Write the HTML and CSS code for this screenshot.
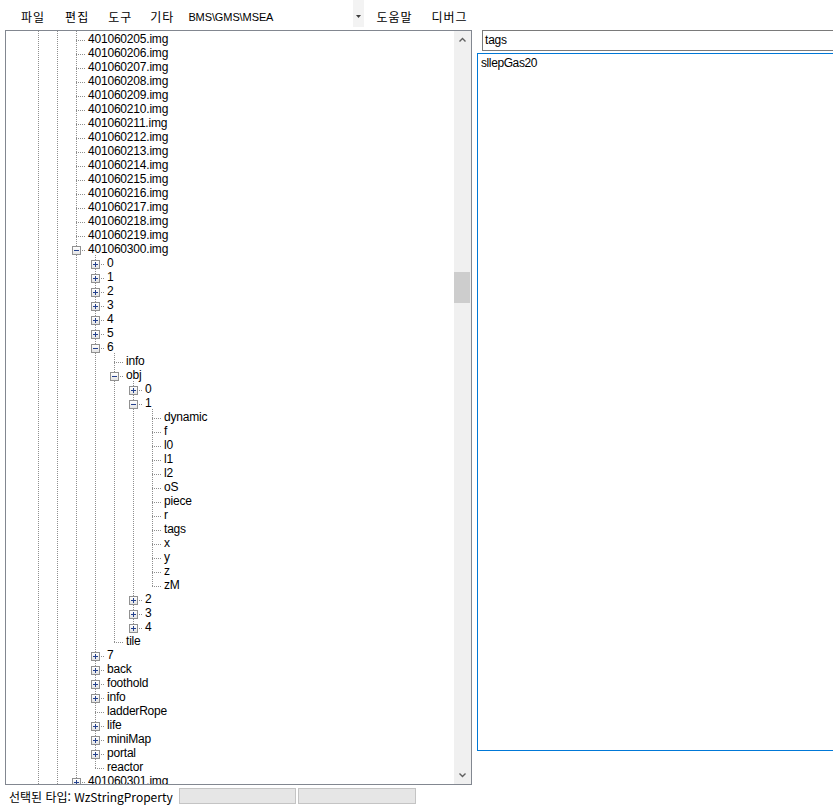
FILE: index.html
```html
<!DOCTYPE html>
<html lang="ko">
<head>
<meta charset="utf-8">
<title>HaRepacker</title>
<link rel="stylesheet" href="styles.css">
</head>
<body>
<div class="app">
  <div class="menubar">
    <span class="mi mi-file">파일</span>
    <span class="mi mi-edit">편집</span>
    <span class="mi mi-tools">도구</span>
    <span class="mi mi-etc">기타</span>
    <div class="combo">
      <span class="combo-text">BMS\GMS\MSEA</span>
      <span class="combo-btn"><svg width="5" height="3" viewBox="0 0 5 3"><path d="M0 0h5L2.5 3z" fill="#3c3c3c"/></svg></span>
    </div>
    <span class="mi mi-help">도움말</span>
    <span class="mi mi-debug">디버그</span>
  </div>

  <div class="main">
    <div class="tree">
      <div class="tree-body">
        <div class="r"><span class="c p"></span><span class="c p"></span><span class="c t"></span><span class="tx">401060205.img</span></div>
        <div class="r"><span class="c p"></span><span class="c p"></span><span class="c t"></span><span class="tx">401060206.img</span></div>
        <div class="r"><span class="c p"></span><span class="c p"></span><span class="c t"></span><span class="tx">401060207.img</span></div>
        <div class="r"><span class="c p"></span><span class="c p"></span><span class="c t"></span><span class="tx">401060208.img</span></div>
        <div class="r"><span class="c p"></span><span class="c p"></span><span class="c t"></span><span class="tx">401060209.img</span></div>
        <div class="r"><span class="c p"></span><span class="c p"></span><span class="c t"></span><span class="tx">401060210.img</span></div>
        <div class="r"><span class="c p"></span><span class="c p"></span><span class="c t"></span><span class="tx">401060211.img</span></div>
        <div class="r"><span class="c p"></span><span class="c p"></span><span class="c t"></span><span class="tx">401060212.img</span></div>
        <div class="r"><span class="c p"></span><span class="c p"></span><span class="c t"></span><span class="tx">401060213.img</span></div>
        <div class="r"><span class="c p"></span><span class="c p"></span><span class="c t"></span><span class="tx">401060214.img</span></div>
        <div class="r"><span class="c p"></span><span class="c p"></span><span class="c t"></span><span class="tx">401060215.img</span></div>
        <div class="r"><span class="c p"></span><span class="c p"></span><span class="c t"></span><span class="tx">401060216.img</span></div>
        <div class="r"><span class="c p"></span><span class="c p"></span><span class="c t"></span><span class="tx">401060217.img</span></div>
        <div class="r"><span class="c p"></span><span class="c p"></span><span class="c t"></span><span class="tx">401060218.img</span></div>
        <div class="r"><span class="c p"></span><span class="c p"></span><span class="c t"></span><span class="tx">401060219.img</span></div>
        <div class="r"><span class="c p"></span><span class="c p"></span><span class="c t"><b class="bx"></b></span><span class="tx">401060300.img</span></div>
        <div class="r"><span class="c p"></span><span class="c p"></span><span class="c p"></span><span class="c t"><b class="bx pl"></b></span><span class="tx">0</span></div>
        <div class="r"><span class="c p"></span><span class="c p"></span><span class="c p"></span><span class="c t"><b class="bx pl"></b></span><span class="tx">1</span></div>
        <div class="r"><span class="c p"></span><span class="c p"></span><span class="c p"></span><span class="c t"><b class="bx pl"></b></span><span class="tx">2</span></div>
        <div class="r"><span class="c p"></span><span class="c p"></span><span class="c p"></span><span class="c t"><b class="bx pl"></b></span><span class="tx">3</span></div>
        <div class="r"><span class="c p"></span><span class="c p"></span><span class="c p"></span><span class="c t"><b class="bx pl"></b></span><span class="tx">4</span></div>
        <div class="r"><span class="c p"></span><span class="c p"></span><span class="c p"></span><span class="c t"><b class="bx pl"></b></span><span class="tx">5</span></div>
        <div class="r"><span class="c p"></span><span class="c p"></span><span class="c p"></span><span class="c t"><b class="bx"></b></span><span class="tx">6</span></div>
        <div class="r"><span class="c p"></span><span class="c p"></span><span class="c p"></span><span class="c p"></span><span class="c t"></span><span class="tx">info</span></div>
        <div class="r"><span class="c p"></span><span class="c p"></span><span class="c p"></span><span class="c p"></span><span class="c t"><b class="bx"></b></span><span class="tx">obj</span></div>
        <div class="r"><span class="c p"></span><span class="c p"></span><span class="c p"></span><span class="c p"></span><span class="c p"></span><span class="c t"><b class="bx pl"></b></span><span class="tx">0</span></div>
        <div class="r"><span class="c p"></span><span class="c p"></span><span class="c p"></span><span class="c p"></span><span class="c p"></span><span class="c t"><b class="bx"></b></span><span class="tx">1</span></div>
        <div class="r"><span class="c p"></span><span class="c p"></span><span class="c p"></span><span class="c p"></span><span class="c p"></span><span class="c p"></span><span class="c t"></span><span class="tx">dynamic</span></div>
        <div class="r"><span class="c p"></span><span class="c p"></span><span class="c p"></span><span class="c p"></span><span class="c p"></span><span class="c p"></span><span class="c t"></span><span class="tx">f</span></div>
        <div class="r"><span class="c p"></span><span class="c p"></span><span class="c p"></span><span class="c p"></span><span class="c p"></span><span class="c p"></span><span class="c t"></span><span class="tx">l0</span></div>
        <div class="r"><span class="c p"></span><span class="c p"></span><span class="c p"></span><span class="c p"></span><span class="c p"></span><span class="c p"></span><span class="c t"></span><span class="tx">l1</span></div>
        <div class="r"><span class="c p"></span><span class="c p"></span><span class="c p"></span><span class="c p"></span><span class="c p"></span><span class="c p"></span><span class="c t"></span><span class="tx">l2</span></div>
        <div class="r"><span class="c p"></span><span class="c p"></span><span class="c p"></span><span class="c p"></span><span class="c p"></span><span class="c p"></span><span class="c t"></span><span class="tx">oS</span></div>
        <div class="r"><span class="c p"></span><span class="c p"></span><span class="c p"></span><span class="c p"></span><span class="c p"></span><span class="c p"></span><span class="c t"></span><span class="tx">piece</span></div>
        <div class="r"><span class="c p"></span><span class="c p"></span><span class="c p"></span><span class="c p"></span><span class="c p"></span><span class="c p"></span><span class="c t"></span><span class="tx">r</span></div>
        <div class="r"><span class="c p"></span><span class="c p"></span><span class="c p"></span><span class="c p"></span><span class="c p"></span><span class="c p"></span><span class="c t"></span><span class="tx">tags</span></div>
        <div class="r"><span class="c p"></span><span class="c p"></span><span class="c p"></span><span class="c p"></span><span class="c p"></span><span class="c p"></span><span class="c t"></span><span class="tx">x</span></div>
        <div class="r"><span class="c p"></span><span class="c p"></span><span class="c p"></span><span class="c p"></span><span class="c p"></span><span class="c p"></span><span class="c t"></span><span class="tx">y</span></div>
        <div class="r"><span class="c p"></span><span class="c p"></span><span class="c p"></span><span class="c p"></span><span class="c p"></span><span class="c p"></span><span class="c t"></span><span class="tx">z</span></div>
        <div class="r"><span class="c p"></span><span class="c p"></span><span class="c p"></span><span class="c p"></span><span class="c p"></span><span class="c p"></span><span class="c l"></span><span class="tx">zM</span></div>
        <div class="r"><span class="c p"></span><span class="c p"></span><span class="c p"></span><span class="c p"></span><span class="c p"></span><span class="c t"><b class="bx pl"></b></span><span class="tx">2</span></div>
        <div class="r"><span class="c p"></span><span class="c p"></span><span class="c p"></span><span class="c p"></span><span class="c p"></span><span class="c t"><b class="bx pl"></b></span><span class="tx">3</span></div>
        <div class="r"><span class="c p"></span><span class="c p"></span><span class="c p"></span><span class="c p"></span><span class="c p"></span><span class="c l"><b class="bx pl"></b></span><span class="tx">4</span></div>
        <div class="r"><span class="c p"></span><span class="c p"></span><span class="c p"></span><span class="c p"></span><span class="c l"></span><span class="tx">tile</span></div>
        <div class="r"><span class="c p"></span><span class="c p"></span><span class="c p"></span><span class="c t"><b class="bx pl"></b></span><span class="tx">7</span></div>
        <div class="r"><span class="c p"></span><span class="c p"></span><span class="c p"></span><span class="c t"><b class="bx pl"></b></span><span class="tx">back</span></div>
        <div class="r"><span class="c p"></span><span class="c p"></span><span class="c p"></span><span class="c t"><b class="bx pl"></b></span><span class="tx">foothold</span></div>
        <div class="r"><span class="c p"></span><span class="c p"></span><span class="c p"></span><span class="c t"><b class="bx pl"></b></span><span class="tx">info</span></div>
        <div class="r"><span class="c p"></span><span class="c p"></span><span class="c p"></span><span class="c t"></span><span class="tx">ladderRope</span></div>
        <div class="r"><span class="c p"></span><span class="c p"></span><span class="c p"></span><span class="c t"><b class="bx pl"></b></span><span class="tx">life</span></div>
        <div class="r"><span class="c p"></span><span class="c p"></span><span class="c p"></span><span class="c t"><b class="bx pl"></b></span><span class="tx">miniMap</span></div>
        <div class="r"><span class="c p"></span><span class="c p"></span><span class="c p"></span><span class="c t"><b class="bx pl"></b></span><span class="tx">portal</span></div>
        <div class="r"><span class="c p"></span><span class="c p"></span><span class="c p"></span><span class="c l"></span><span class="tx">reactor</span></div>
        <div class="r"><span class="c p"></span><span class="c p"></span><span class="c t"><b class="bx pl"></b></span><span class="tx">401060301.img</span></div>
      </div>
      <div class="vscroll">
        <div class="sb-btn"><svg width="7" height="5" viewBox="0 0 7 5"><path d="M0.5 4.5L3.5 1.5L6.5 4.5" fill="none" stroke="#606060" stroke-width="1.4"/></svg></div>
        <div class="sb-track"><div class="sb-thumb"></div></div>
        <div class="sb-btn"><svg width="7" height="5" viewBox="0 0 7 5"><path d="M0.5 0.5L3.5 3.5L6.5 0.5" fill="none" stroke="#606060" stroke-width="1.4"/></svg></div>
      </div>
    </div>

    <div class="side">
      <div class="textbox">tags</div>
      <div class="textarea">sllepGas20</div>
    </div>
  </div>

  <div class="statusbar">
    <span class="status-text">선택된 타입: WzStringProperty</span>
    <span class="sbox sbox-1"></span>
    <span class="sbox sbox-2"></span>
  </div>
</div>
</body>
</html>
```
FILE: styles.css
```css
* { box-sizing: border-box; }

html, body {
  margin: 0;
  padding: 0;
  background: #ffffff;
  overflow: hidden;
}

body {
  width: 833px;
  height: 810px;
  font-family: "Liberation Sans", Arial, sans-serif;
  font-size: 12px;
  color: #000;
}

/* ---------- menu bar ---------- */
.menubar {
  display: flex;
  align-items: center;
  height: 30px;
  font-family: "Noto Sans CJK KR", "Noto Sans", sans-serif;
  font-size: 12px;
}

.mi {
  line-height: 16px;
  padding-top: 3px;
  white-space: nowrap;
  letter-spacing: 1px;
}
.mi-file { margin-left: 21px; }
.mi-edit { margin-left: 20px; }
.mi-tools { margin-left: 19px; }
.mi-etc { margin-left: 18px; }
.mi-help { margin-left: 12px; }
.mi-debug { margin-left: 19px; }

.combo {
  align-self: flex-start;
  display: flex;
  width: 176px;
  height: 27px;
  margin-left: 14px;
}
.combo-text {
  align-self: center;
  padding-top: 6px;
  font-family: "Liberation Sans", Arial, sans-serif;
  font-size: 11px;
  letter-spacing: -0.1px;
}
.combo-btn {
  margin-left: auto;
  width: 11px;
  background: #f3f3f3;
  display: flex;
  align-items: center;
  justify-content: center;
  padding-top: 6px;
}
.combo-btn svg { display: block; }

/* ---------- main area ---------- */
.main {
  display: flex;
  height: 755px;
}

.tree {
  display: flex;
  width: 467px;
  height: 755px;
  margin-left: 5px;
  border: 1px solid #828790;
  background: #fff;
}

.tree-body {
  flex: 1;
  overflow: hidden;
  padding-left: 23px;
}

.r {
  display: flex;
  height: 14px;
  white-space: nowrap;
}

.c {
  flex: none;
  width: 19px;
  height: 14px;
  padding-left: 5px;
  padding-top: 5px;
}

.p {
  background: repeating-linear-gradient(#8f8f8f 0 1px, transparent 1px 2px) 9px 0 / 1px 14px no-repeat;
}
.t {
  background:
    repeating-linear-gradient(#8f8f8f 0 1px, transparent 1px 2px) 9px 0 / 1px 14px no-repeat,
    repeating-linear-gradient(90deg, #8f8f8f 0 1px, transparent 1px 2px) 9px 9px / 10px 1px no-repeat;
}
.l {
  background:
    repeating-linear-gradient(#8f8f8f 0 1px, transparent 1px 2px) 9px 0 / 1px 10px no-repeat,
    repeating-linear-gradient(90deg, #8f8f8f 0 1px, transparent 1px 2px) 9px 9px / 10px 1px no-repeat;
}

.bx {
  display: block;
  width: 9px;
  height: 9px;
  border: 1px solid #919191;
  background:
    linear-gradient(#24418d, #24418d) 1px 3px / 5px 1px no-repeat,
    linear-gradient(#ffffff, #e4e4e4);
}
.bx.pl {
  background:
    linear-gradient(#24418d, #24418d) 3px 1px / 1px 5px no-repeat,
    linear-gradient(#24418d, #24418d) 1px 3px / 5px 1px no-repeat,
    linear-gradient(#ffffff, #e4e4e4);
}

.tx {
  margin-left: 2px;
  line-height: 16px;
  height: 14px;
  letter-spacing: -0.2px;
}

/* ---------- scrollbar ---------- */
.vscroll {
  flex: none;
  width: 17px;
  display: flex;
  flex-direction: column;
  background: #f0f0f0;
}
.sb-btn {
  height: 17px;
  display: flex;
  align-items: center;
  justify-content: center;
}
.sb-btn svg { display: block; }
.sb-track { flex: 1; }
.sb-thumb {
  margin: 224px 1px 0 0;
  height: 31px;
  background: #cdcdcd;
}

/* ---------- right side ---------- */
.side {
  flex: 1;
  display: flex;
  flex-direction: column;
  margin-left: 5px;
  min-width: 0;
}

.textbox {
  height: 21px;
  margin-left: 5px;
  margin-right: -20px;
  border: 1px solid #7a7a7a;
  padding-left: 2px;
  line-height: 18px;
  letter-spacing: -0.2px;
}

.textarea {
  height: 698px;
  margin-top: 2px;
  margin-right: -20px;
  border: 1px solid #0078d7;
  padding: 1px 0 0 3px;
  line-height: 16px;
  letter-spacing: -0.4px;
}

/* ---------- status bar ---------- */
.statusbar {
  display: flex;
  height: 25px;
  padding-left: 9px;
}
.status-text {
  width: 170px;
  font-family: "Noto Sans CJK KR", "Noto Sans", sans-serif;
  font-size: 12px;
  line-height: 16px;
  padding-top: 4px;
  white-space: nowrap;
}
.sbox {
  margin-top: 3px;
  height: 16px;
  background: #e6e6e6;
  border: 1px solid #c4c4c4;
}
.sbox-1 { width: 117px; }
.sbox-2 { width: 118px; margin-left: 2px; }
```
